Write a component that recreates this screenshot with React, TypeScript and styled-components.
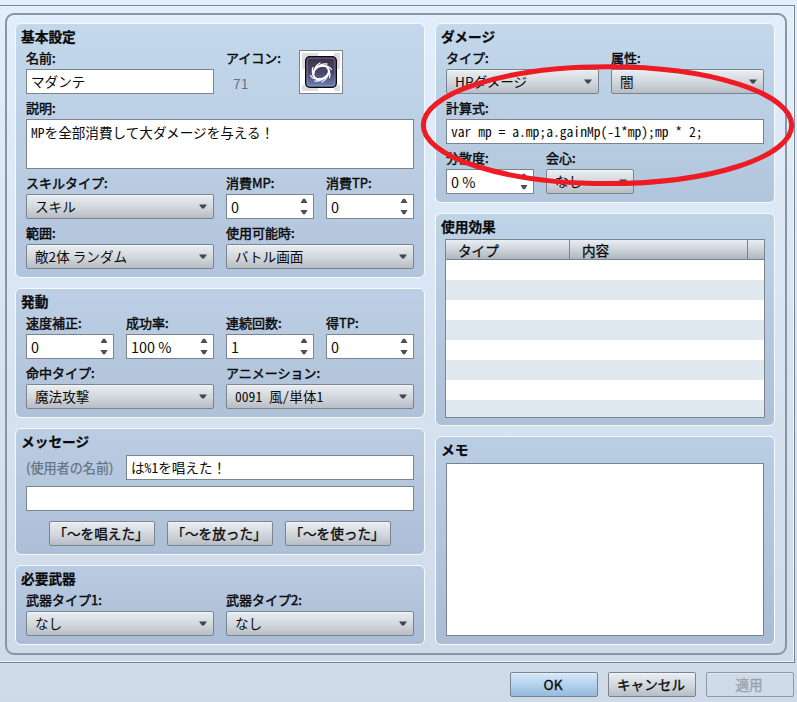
import React from "react";
import styled, { createGlobalStyle, css } from "styled-components";

const GlobalStyle = createGlobalStyle`
  *, *::before, *::after { box-sizing: border-box; }
  html, body { margin: 0; padding: 0; }
  body {
    width: 797px;
    height: 702px;
    overflow: hidden;
    font-family: "Noto Sans CJK JP", sans-serif;
    font-size: 13.6px;
    color: #0a0a0a;
  }
`;

const LINE = "#7b838c";

const Window = styled.div`
  position: relative;
  width: 797px;
  height: 702px;
  padding-top: 5px;
  background: linear-gradient(#e3eefd 0%, #dce7f6 35%, #d3deec 75%, #cfdae8 100%);
`;

const TabPage = styled.div`
  width: 795px;
  height: 658px;
  padding: 7px 0 0 5px;
  border: 1px solid ${LINE};
  border-left: 0;
  box-shadow: inset -1px 1px 0 #edf4fd, inset 0 -1px 0 #e9f1f8;
`;

const Frame = styled.div`
  display: flex;
  gap: 10px;
  width: 782px;
  height: 642px;
  padding: 8px;
  border: 2px solid #8a95a2;
  border-radius: 9px;
`;

const Column = styled.div<{ $width: number }>`
  display: flex;
  flex-direction: column;
  gap: 10px;
  width: ${(p) => p.$width}px;
`;

const Group = styled.section<{ $height: number; $from: string; $to: string }>`
  height: ${(p) => p.$height}px;
  padding: 0 10px;
  border: 1px solid #f6faff;
  border-radius: 6px;
  background: linear-gradient(${(p) => p.$from}, ${(p) => p.$to});
`;

const Title = styled.h2`
  height: 20px;
  margin: 0 0 0 -5px;
  font-size: 13.7px;
  font-weight: 700;
  line-height: 24px;
  white-space: nowrap;
  -webkit-text-stroke: 0.25px currentColor;
`;

const Row = styled.div`
  display: flex;
  gap: 12px;
`;

const NameRow = styled(Row)`
  height: 50px;
`;

const Cell = styled.div<{ $width: number }>`
  flex: none;
  width: ${(p) => p.$width}px;
`;

const Label = styled.div`
  height: 25px;
  font-size: 13px;
  line-height: 28px;
  white-space: nowrap;
  -webkit-text-stroke: 0.45px currentColor;
`;

const boxed = css`
  display: flex;
  align-items: center;
  height: 25px;
  border: 1px solid ${LINE};
  white-space: pre;
`;

const Input = styled.div<{ $mono?: boolean }>`
  ${boxed}
  padding: 0 4px 2px;
  background: #fff;
  ${(p) => p.$mono && css`font-feature-settings: "hwid";`}
`;

const TextArea = styled(Input)<{ $height: number }>`
  height: ${(p) => p.$height}px;
  align-items: flex-start;
  padding-top: 2px;
`;

const FullWidth = styled.span`
  font-feature-settings: normal;
`;

const SelectBox = styled.div<{ $mono?: boolean }>`
  ${boxed}
  justify-content: space-between;
  padding: 0 6px 2px 8px;
  border-radius: 2px;
  background: linear-gradient(#e9eef3, #cfd4da 60%, #b7bdc4);
  box-shadow: inset 0 1px 0 #f3f6f9;
  ${(p) => p.$mono && css`font-feature-settings: "hwid";`}
`;

const SpinBox = styled(Input)`
  justify-content: space-between;
  padding: 0 5px 0 4px;
  font-size: 14.4px;
`;

const SpinArrows = styled.svg`
  flex: none;
  width: 8px;
  height: 17px;
  fill: #4b5157;
`;

const DropArrow = styled.svg`
  flex: none;
  width: 8px;
  height: 5px;
  margin-top: 2px;
  fill: #41474d;
`;

const IconNumber = styled.div`
  padding-left: 7px;
  font-size: 13.8px;
  line-height: 28px;
  color: #6a747e;
`;

const IconBox = styled.div`
  align-self: flex-end;
  width: 44px;
  height: 44px;
  margin-left: -12px;
  border: 1px solid ${LINE};
  background: #fff;
  svg { display: block; }
`;

const MessageBody = styled.div`
  display: flex;
  flex-direction: column;
  gap: 6px;
  padding-top: 6px;
`;

const Hint = styled.div`
  width: 88px;
  font-size: 13.1px;
  line-height: 25px;
  color: #66727f;
  white-space: nowrap;
  -webkit-text-stroke: 0.25px currentColor;
`;

const ButtonRow = styled(Row)`
  justify-content: center;
  padding-top: 4px;
`;

const Button = styled.button<{ $width: number; $tone?: "primary" | "disabled" }>`
  ${boxed}
  justify-content: center;
  width: ${(p) => p.$width}px;
  padding: 0 2px 1px 0;
  border-radius: 2px;
  background: linear-gradient(#e9eef3, #cfd4da 60%, #b7bdc4);
  box-shadow: inset 0 1px 0 #f3f6f9;
  color: #0a0a0a;
  font: inherit;
  -webkit-text-stroke: 0.35px currentColor;
  ${(p) => p.$tone === "primary" && css`
    background: linear-gradient(#d5eafa, #b3d2ec 50%, #96badd);
    box-shadow: inset 0 1px 0 #e2f2fd;
  `}
  ${(p) => p.$tone === "disabled" && css`
    background: #d0dbe8;
    border-color: #8f99a5;
    box-shadow: inset 0 1px 0 #dfe8f2;
    color: #99a2ac;
  `}
`;

const Table = styled.div`
  width: 320px;
  height: 179px;
  margin: -5px 0 0 -1px;
  border: 1px solid ${LINE};
  overflow: hidden;
`;

const TableHead = styled.div`
  display: flex;
  height: 20px;
  border-bottom: 1px solid ${LINE};
  background: linear-gradient(#e9eef4, #cdd3da 50%, #b0b6bf);
`;

const HeadCell = styled.div<{ $width: number }>`
  width: ${(p) => p.$width}px;
  padding-left: 12px;
  border-right: 1px solid ${LINE};
  line-height: 20px;
  -webkit-text-stroke: 0.3px currentColor;
`;

const TableRow = styled.div`
  height: 20px;
  background: #fff;
  &:nth-child(odd) { background: #e1e9f0; }
`;

const TableSpace = styled.div`
  padding-top: 10px;
`;

const MemoSpace = styled.div`
  padding-top: 6px;
`;

const Footer = styled.footer`
  display: flex;
  justify-content: flex-end;
  gap: 10px;
  padding: 9px 3px 0 0;
`;

const Marker = styled.svg`
  position: absolute;
  left: 0;
  top: 0;
  pointer-events: none;
`;

function Select({ label, width, value, mono }: { label: string; width: number; value: string; mono?: boolean }) {
  return (
    <Cell $width={width}>
      <Label>{label}</Label>
      <SelectBox $mono={mono}>
        {value}
        <DropArrow viewBox="0 0 8 5"><path d="M0 .5h8L5 4.5H3z" /></DropArrow>
      </SelectBox>
    </Cell>
  );
}

function Spin({ label, value }: { label: string; value: string }) {
  return (
    <Cell $width={88}>
      <Label>{label}</Label>
      <SpinBox>
        {value}
        <SpinArrows viewBox="0 0 8 17"><path d="M.5 5h7L5 .8H3zM.5 12h7L5 16.2H3z" /></SpinArrows>
      </SpinBox>
    </Cell>
  );
}

function VortexIcon() {
  return (
    <svg width="42" height="42" viewBox="0 0 42 42">
      <defs>
        <linearGradient id="vortex" x1="0" y1="0" x2="0" y2="1">
          <stop offset="0" stopColor="#3d3048" />
          <stop offset=".5" stopColor="#494467" />
          <stop offset="1" stopColor="#6c83bd" />
        </linearGradient>
      </defs>
      <path fill="#dcdddf" d="M2 2h16v16H2zM34 2h6v16h-6zM2 34h16v6H2zM34 34h6v6h-6z" />
      <rect x="5.75" y="5.75" width="30.5" height="30.5" rx="4" fill="url(#vortex)" stroke="#0b0710" strokeWidth="1.5" />
      <rect x="7" y="7" width="28" height="28" rx="3" fill="none" stroke="#c9c9dc" strokeOpacity=".45" />
      <g transform="translate(21 21.5)" fill="none" stroke="#fff" strokeLinecap="round">
        <ellipse rx="8.3" ry="6.3" transform="rotate(-28)" strokeWidth="1.9" />
        <g strokeWidth="1.3">
          <path d="M-7 1Q-7-6-1-9.5M-5-4Q-1-9 6-8.5M0-6Q7-8 10.500-3M6-5Q10 0 8.500 5M8-1Q7 6 1 9.500M5 4Q0 9-6 8.500M0 6Q-7 8-10.500 3M-6 5Q-10 0-8-5" />
        </g>
      </g>
    </svg>
  );
}

export default function App() {
  return (
    <>
      <GlobalStyle />
      <Window>
        <TabPage>
          <Frame>
            <Column $width={410}>
              <Group $height={255} $from="#c4d8ec" $to="#b1c4db">
                <Title>基本設定</Title>
                <NameRow>
                  <Cell $width={188}>
                    <Label>名前:</Label>
                    <Input>マダンテ</Input>
                  </Cell>
                  <Cell $width={73}>
                    <Label>アイコン:</Label>
                    <IconNumber>71</IconNumber>
                  </Cell>
                  <IconBox><VortexIcon /></IconBox>
                </NameRow>
                <Label>説明:</Label>
                <TextArea $mono $height={50}>MPを全部消費して大ダメージを与える<FullWidth>！</FullWidth></TextArea>
                <Row>
                  <Select label="スキルタイプ:" width={188} value="スキル" />
                  <Spin label="消費MP:" value="0" />
                  <Spin label="消費TP:" value="0" />
                </Row>
                <Row>
                  <Select label="範囲:" width={188} value="敵2体 ランダム" />
                  <Select label="使用可能時:" width={188} value="バトル画面" />
                </Row>
              </Group>
              <Group $height={130} $from="#bccfe4" $to="#afc1d8">
                <Title>発動</Title>
                <Row>
                  <Spin label="速度補正:" value="0" />
                  <Spin label="成功率:" value="100 %" />
                  <Spin label="連続回数:" value="1" />
                  <Spin label="得TP:" value="0" />
                </Row>
                <Row>
                  <Select label="命中タイプ:" width={188} value="魔法攻撃" />
                  <Select label="アニメーション:" width={188} value="0091 風/単体1" mono />
                </Row>
              </Group>
              <Group $height={127} $from="#bacde3" $to="#adbfd6">
                <Title>メッセージ</Title>
                <MessageBody>
                  <Row>
                    <Hint>(使用者の名前)</Hint>
                    <Cell $width={288}><Input $mono>は%1を唱えた<FullWidth>！</FullWidth></Input></Cell>
                  </Row>
                  <Input />
                  <ButtonRow>
                    <Button $width={106}>「～を唱えた」</Button>
                    <Button $width={106}>「～を放った」</Button>
                    <Button $width={106}>「～を使った」</Button>
                  </ButtonRow>
                </MessageBody>
              </Group>
              <Group $height={80} $from="#b8cbe1" $to="#aabdd4">
                <Title>必要武器</Title>
                <Row>
                  <Select label="武器タイプ1:" width={188} value="なし" />
                  <Select label="武器タイプ2:" width={188} value="なし" />
                </Row>
              </Group>
            </Column>
            <Column $width={340}>
              <Group $height={180} $from="#c4d8ec" $to="#b1c6dc">
                <Title>ダメージ</Title>
                <Row>
                  <Select label="タイプ:" width={153} value="HPダメージ" />
                  <Select label="属性:" width={153} value="闇" />
                </Row>
                <Label>計算式:</Label>
                <Input $mono>var mp = a.mp;a.gainMp(-1*mp);mp * 2;</Input>
                <Row>
                  <Spin label="分散度:" value="0 %" />
                  <Select label="会心:" width={88} value="なし" />
                </Row>
              </Group>
              <Group $height={213} $from="#bfd3e7" $to="#aec0d8">
                <Title>使用効果</Title>
                <TableSpace>
                  <Table>
                    <TableHead>
                      <HeadCell $width={124}>タイプ</HeadCell>
                      <HeadCell $width={178}>内容</HeadCell>
                    </TableHead>
                    {Array.from({ length: 8 }, (_, i) => <TableRow key={i} />)}
                  </Table>
                </TableSpace>
              </Group>
              <Group $height={209} $from="#b9cde3" $to="#aabdd4">
                <Title>メモ</Title>
                <MemoSpace><TextArea $height={173} /></MemoSpace>
              </Group>
            </Column>
          </Frame>
        </TabPage>
        <Footer>
          <Button $width={88} $tone="primary">OK</Button>
          <Button $width={88}>キャンセル</Button>
          <Button $width={88} $tone="disabled" disabled>適用</Button>
        </Footer>
        <Marker width="797" height="702" viewBox="0 0 797 702">
          <ellipse cx="607.5" cy="125.2" rx="184.2" ry="58.4" fill="none" stroke="#ed1c24" strokeWidth="5" />
        </Marker>
      </Window>
    </>
  );
}
